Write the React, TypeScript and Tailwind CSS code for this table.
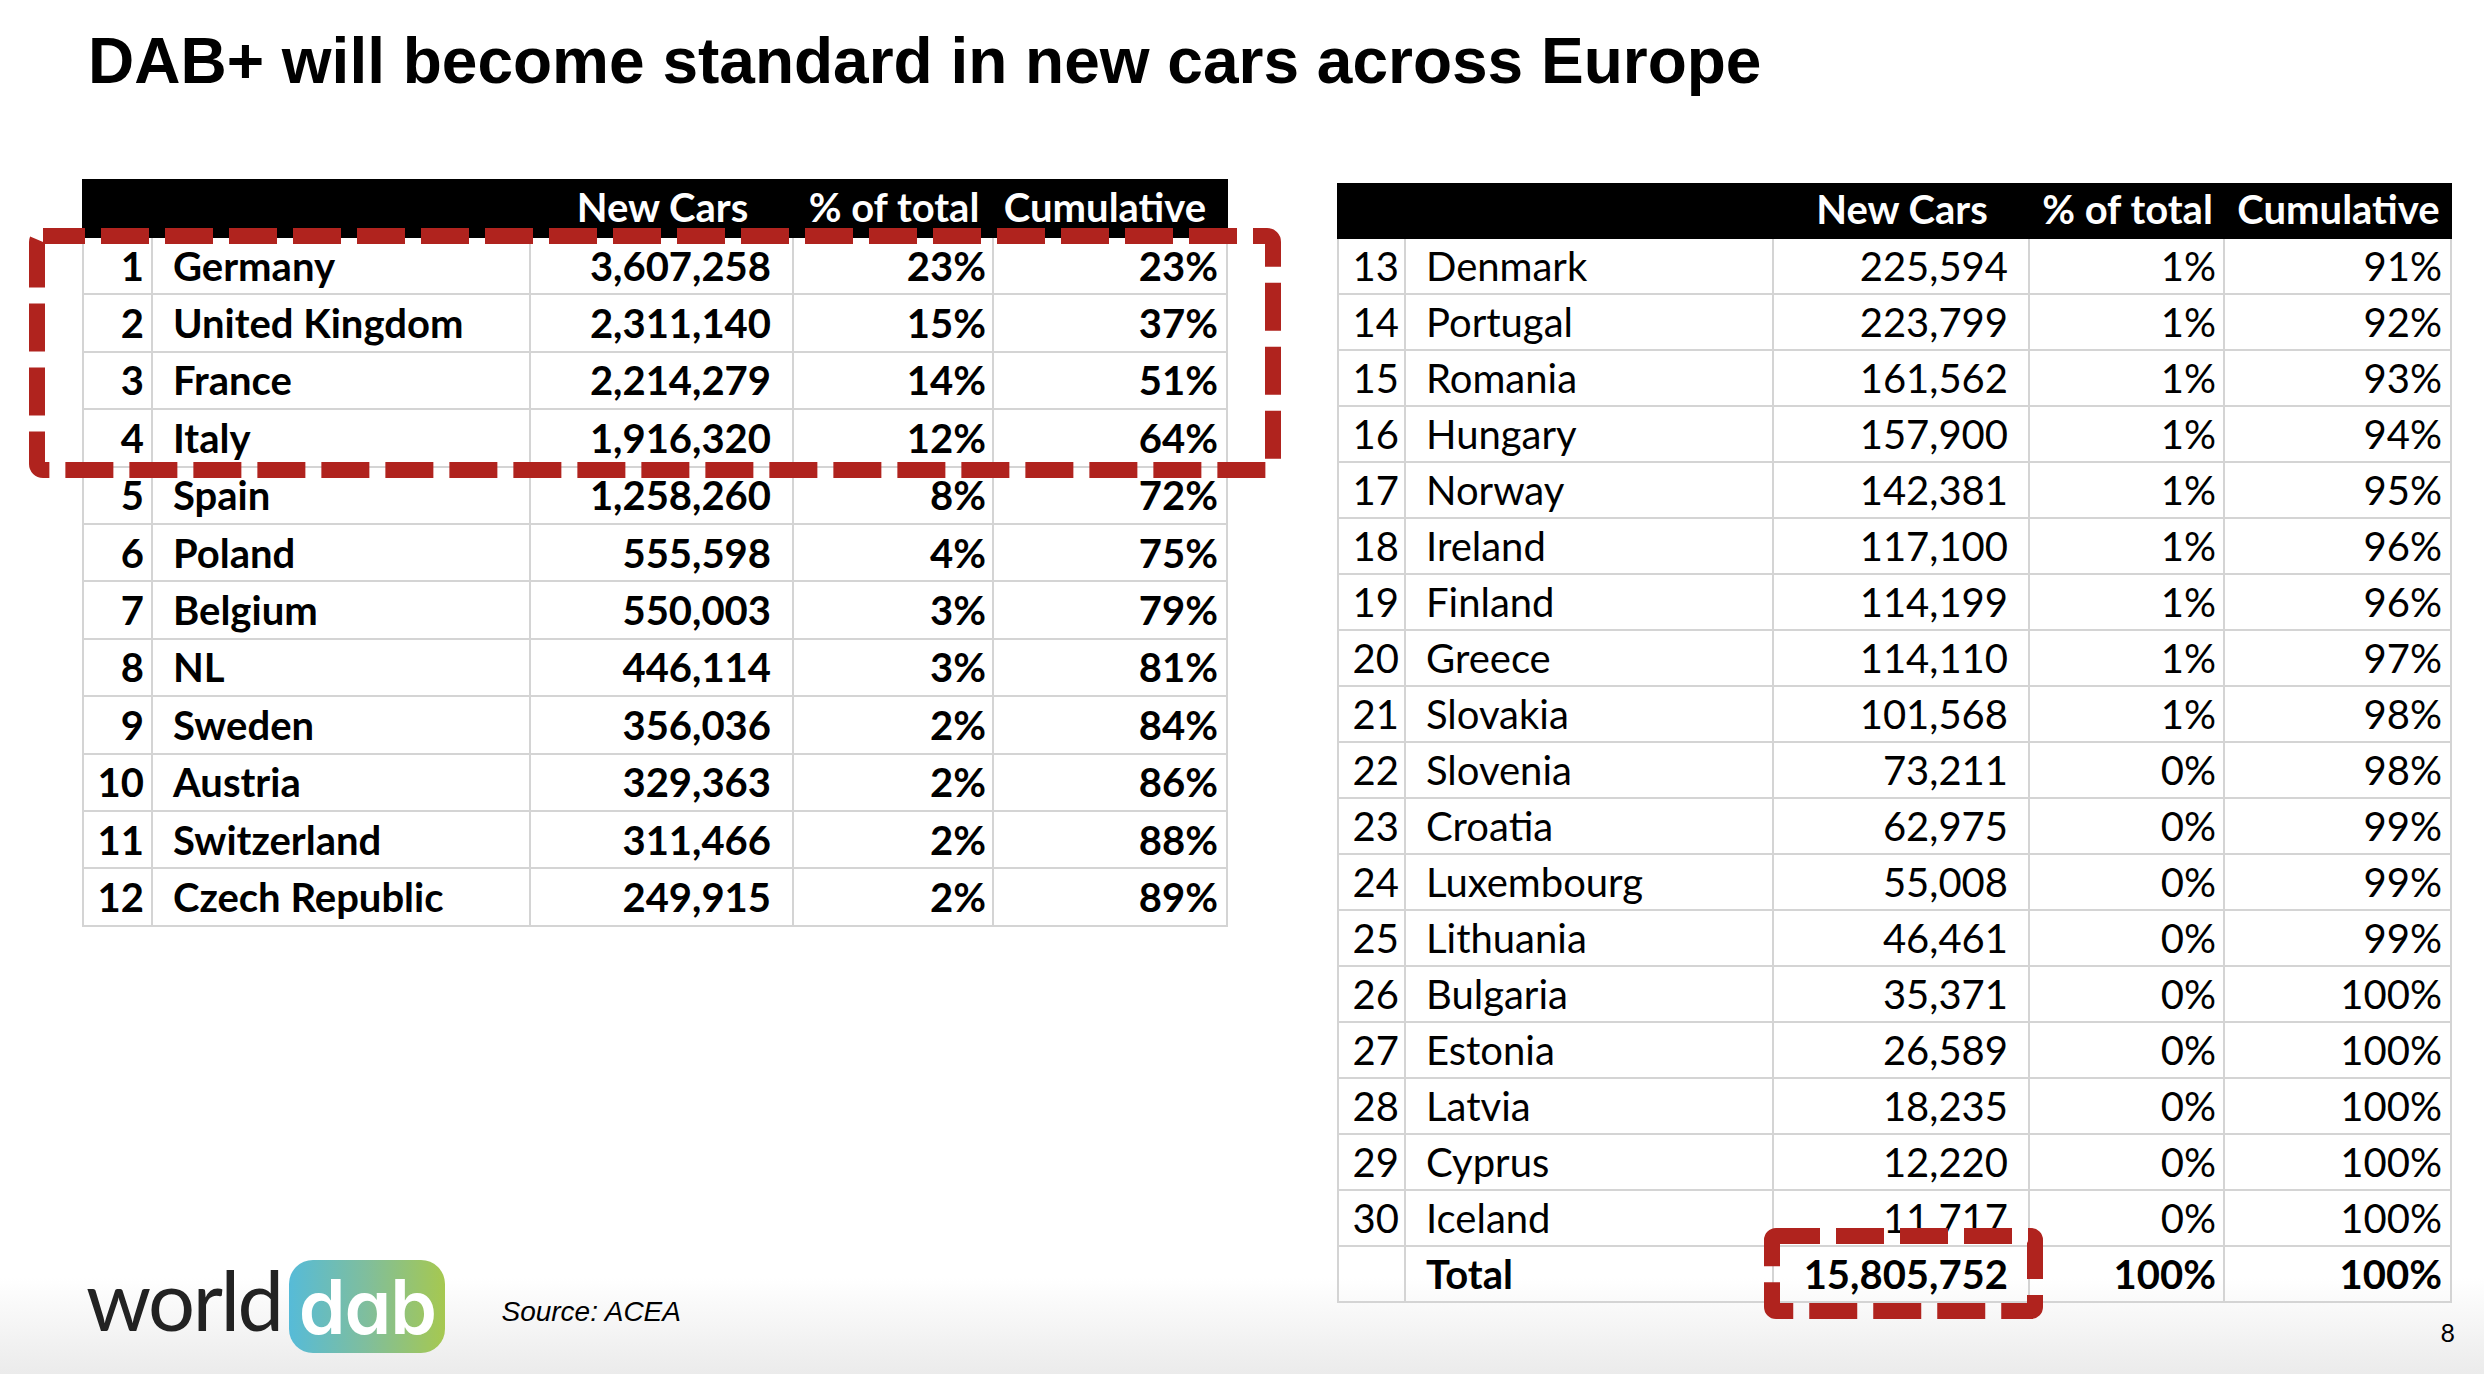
type Row = [string, string, string, string, string];

const leftRows: Row[] = [
  ["1", "Germany", "3,607,258", "23%", "23%"],
  ["2", "United Kingdom", "2,311,140", "15%", "37%"],
  ["3", "France", "2,214,279", "14%", "51%"],
  ["4", "Italy", "1,916,320", "12%", "64%"],
  ["5", "Spain", "1,258,260", "8%", "72%"],
  ["6", "Poland", "555,598", "4%", "75%"],
  ["7", "Belgium", "550,003", "3%", "79%"],
  ["8", "NL", "446,114", "3%", "81%"],
  ["9", "Sweden", "356,036", "2%", "84%"],
  ["10", "Austria", "329,363", "2%", "86%"],
  ["11", "Switzerland", "311,466", "2%", "88%"],
  ["12", "Czech Republic", "249,915", "2%", "89%"],
];

const rightRows: Row[] = [
  ["13", "Denmark", "225,594", "1%", "91%"],
  ["14", "Portugal", "223,799", "1%", "92%"],
  ["15", "Romania", "161,562", "1%", "93%"],
  ["16", "Hungary", "157,900", "1%", "94%"],
  ["17", "Norway", "142,381", "1%", "95%"],
  ["18", "Ireland", "117,100", "1%", "96%"],
  ["19", "Finland", "114,199", "1%", "96%"],
  ["20", "Greece", "114,110", "1%", "97%"],
  ["21", "Slovakia", "101,568", "1%", "98%"],
  ["22", "Slovenia", "73,211", "0%", "98%"],
  ["23", "Croatia", "62,975", "0%", "99%"],
  ["24", "Luxembourg", "55,008", "0%", "99%"],
  ["25", "Lithuania", "46,461", "0%", "99%"],
  ["26", "Bulgaria", "35,371", "0%", "100%"],
  ["27", "Estonia", "26,589", "0%", "100%"],
  ["28", "Latvia", "18,235", "0%", "100%"],
  ["29", "Cyprus", "12,220", "0%", "100%"],
  ["30", "Iceland", "11,717", "0%", "100%"],
];

const headers = ["", "", "New Cars", "% of total", "Cumulative"];

const cellBase = "flex items-center h-full border-r-2 border-b-2 border-[#d4d4d4]";

// left table: 82 | 153 | 531 | 794 | 994 | 1228
const leftCols = [
  `${cellBase} w-[71px] border-l-2 justify-end pr-[7px]`,
  `${cellBase} w-[378px] justify-start pl-[20px]`,
  `${cellBase} w-[263px] justify-end pr-[21px]`,
  `${cellBase} w-[200px] justify-end pr-[6px]`,
  `${cellBase} w-[234px] justify-end pr-[8px]`,
];
const leftHead = ["w-[71px]", "w-[378px]", "w-[263px]", "w-[200px]", "w-[234px] pr-[12px]"];

// right table: 1337 | 1406 | 1774 | 2030 | 2225 | 2452
const rightCols = [
  `${cellBase} w-[69px] border-l-2 justify-end pr-[5px]`,
  `${cellBase} w-[368px] justify-start pl-[20px]`,
  `${cellBase} w-[256px] justify-end pr-[20px]`,
  `${cellBase} w-[195px] justify-end pr-[7px]`,
  `${cellBase} w-[227px] justify-end pr-[8px]`,
];
const rightHead = ["w-[69px]", "w-[368px]", "w-[256px]", "w-[195px]", "w-[227px]"];

function DashBox({ w, h, rx, className }: { w: number; h: number; rx: number; className: string }) {
  return (
    <svg width={w} height={h} className={className}>
      <rect
        x={8}
        y={8}
        width={w - 16}
        height={h - 16}
        rx={rx}
        fill="none"
        stroke="#b0231e"
        strokeWidth={16}
        strokeDasharray="48 16"
        strokeDashoffset={rx}
      />
    </svg>
  );
}

export default function App() {
  return (
    <div className="w-[2484px] h-[1374px] overflow-hidden flex flex-col bg-[linear-gradient(to_bottom,#ffffff_0%,#ffffff_93%,#ebebeb_100%)] text-black font-['Lato',sans-serif]">
      {/* Title */}
      <h1 className="pl-[88px] pt-[29px] text-[64px] leading-none font-bold font-['Liberation_Sans',Arial,sans-serif]">
        DAB+ will become standard in new cars across Europe
      </h1>

      <div className="flex items-start mt-[86px]">
        {/* Left column: top 12 + logo */}
        <div className="ml-[82px] flex flex-col">
          <div className="relative text-[40px] leading-none">
            <div className="flex h-[59px] bg-black text-white font-bold">
              {headers.map((h, i) => (
                <div key={i} className={`${leftHead[i]} flex items-end justify-center pb-[11px] whitespace-nowrap`}>
                  {h}
                </div>
              ))}
            </div>
            {leftRows.map((r) => (
              <div key={r[0]} className="flex h-[57.4px] font-bold">
                {r.map((c, i) => (
                  <div key={i} className={`${leftCols[i]} whitespace-nowrap`}>
                    {c}
                  </div>
                ))}
              </div>
            ))}
            <DashBox w={1252} h={250} rx={6} className="absolute left-[-53px] top-[49px]" />
          </div>

          {/* Footer */}
          <div className="flex items-start mt-[333px] ml-[4px]">
            <span className="mt-[-2px] text-[83px] leading-none font-normal tracking-[-2.5px] text-[#222222] font-['Lato',sans-serif]">
              world
            </span>
            <div className="ml-[8px] w-[156px] h-[93px] rounded-[24px] bg-[linear-gradient(to_right,#56bbd8,#80be9c_50%,#a6c850)] flex items-center justify-center">
              <span className="text-white text-[75px] leading-none font-semibold tracking-[-1px] font-['Inter',sans-serif] [font-feature-settings:'cv11']">
                dab
              </span>
            </div>
            <span className="ml-[56px] mt-[38px] text-[28px] leading-none italic font-['Liberation_Sans',Arial,sans-serif]">
              Source: ACEA
            </span>
          </div>
        </div>

        {/* Right column: 13-30 + total */}
        <div className="ml-[109px] mt-[4px] flex flex-col">
          <div className="relative text-[40px] leading-none">
            <div className="flex h-[56px] bg-black text-white font-bold">
              {headers.map((h, i) => (
                <div key={i} className={`${rightHead[i]} flex items-end justify-center pb-[10px] whitespace-nowrap`}>
                  {h}
                </div>
              ))}
            </div>
            {rightRows.map((r) => (
              <div key={r[0]} className="flex h-[56px] font-normal">
                {r.map((c, i) => (
                  <div key={i} className={`${rightCols[i]} whitespace-nowrap`}>
                    {c}
                  </div>
                ))}
              </div>
            ))}
            <div className="flex h-[56px] font-bold">
              {["", "Total", "15,805,752", "100%", "100%"].map((c, i) => (
                <div key={i} className={`${rightCols[i]} whitespace-nowrap`}>
                  {c}
                </div>
              ))}
            </div>
            <DashBox w={279} h={91} rx={4} className="absolute left-[427px] top-[1045px]" />
          </div>
          <div className="self-end -mr-[3px] mt-[17px] text-[25px] leading-none">8</div>
        </div>
      </div>
    </div>
  );
}
